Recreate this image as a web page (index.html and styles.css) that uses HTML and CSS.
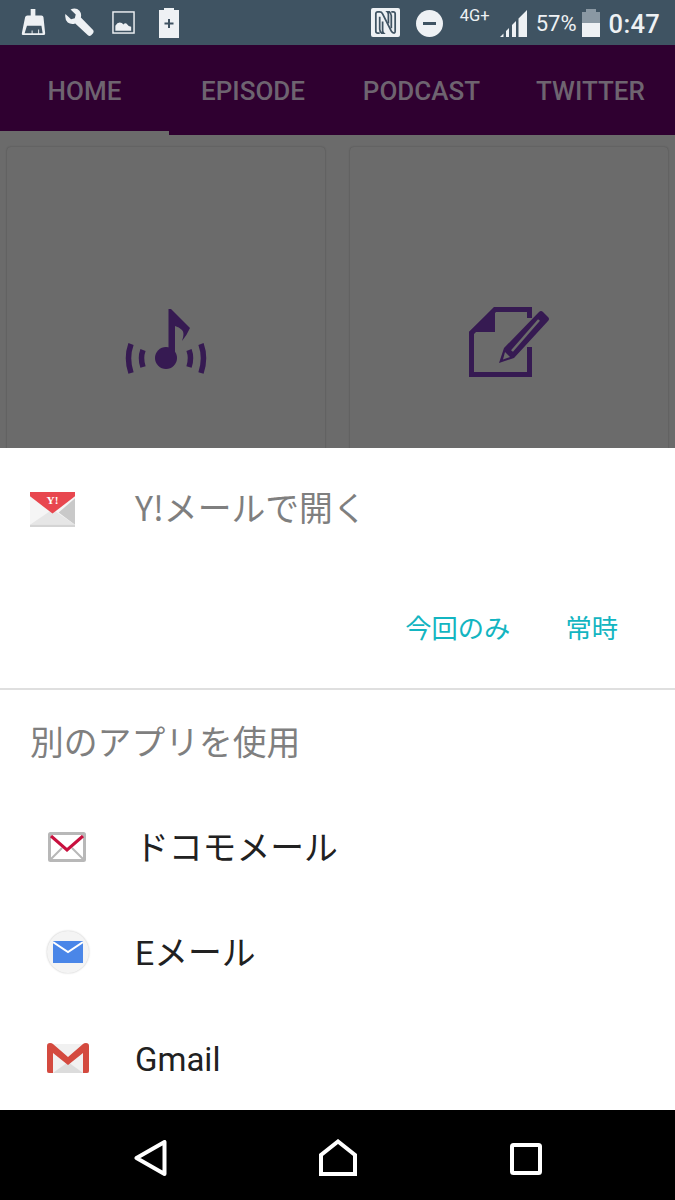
FILE: index.html
```html
<!DOCTYPE html>
<html lang="ja">
<head>
<meta charset="utf-8">
<title>Share sheet</title>
<link rel="stylesheet" href="styles.css">
</head>
<body>
<div class="screen">
  <header class="status">
    <div class="status-left">
      <svg class="ic-broom" viewBox="0 0 26 30"><path fill="#eef1f4" d="M10 1h5v7h6.500q2 0 2.200 2L25.500 27q.2 2-1.800 2H2q-2 0-1.500-2L4 10q.4-2 2.500-2H10z"/><path fill="#3f5362" d="M6 19h15.500l1.300 8H19v-4h-1v4h-6v-3h-1v3H3.500z"/></svg>
      <svg class="ic-wrench" viewBox="0 0 32 32"><path fill="#eef1f4" d="M1.500 6.500 7.500 12l4-1 1-4L7 1.500Q13-1 16.500 3q2.500 3 1.500 7L31 23.500q1.200 1.500 0 3.500l-2 2q-1.800 1.500-3.500 0L12 16.500q-4.500 1.500-8-1Q.5 12 1.500 6.500z"/></svg>
      <svg class="ic-image" viewBox="0 0 24 24"><rect x="1" y="1" width="22" height="22" fill="none" stroke="#eef1f4" stroke-width="1.500"/><path fill="#eef1f4" d="M3.500 20.500v-5q2-3.500 4.500-3.500t4 2q1.500-2 3-1 1.500 2.500 5 3.500v4z"/></svg>
      <svg class="ic-batt" viewBox="0 0 20 30"><path fill="#eef1f4" d="M5 0h10v2h5v28H0V2h5z"/><path fill="none" stroke="#3f5362" stroke-width="2" d="M10 11v9M5.500 15.500h9"/></svg>
    </div>
    <div class="status-right">
      <svg class="ic-nfc" viewBox="0 0 30 30"><rect width="30" height="30" rx="2" fill="#eef1f4"/><path fill="none" stroke="#3f5362" stroke-width="1.800" d="M9 26H7q-2 0-2-2V6q0-2 2-2h2q2 0 3 2l9 18q1 2 3 2 1 0 1-2V6q0-2-2-2h-2"/><path fill="none" stroke="#3f5362" stroke-width="1.800" d="M9 9v13q0 2 2 4h2q-1-1-1-3v-9M21 21V8q0-2-2-4h-2q1 1 1 3v9"/></svg>
      <span class="dnd"><span class="dnd-bar"></span></span>
      <span class="net">4G+</span>
      <svg class="ic-signal" viewBox="0 0 27 28"><path fill="#eef1f4" d="M0 28l3.500-3.500V28zM6 22l3-3v9H6zM12 16l4-4v16h-4zM18.500 9.500 27 1v27h-8.500z"/></svg>
      <span class="pct">57%</span>
      <span class="batt"><span class="batt-cap"></span><span class="batt-body"><span class="batt-fill"></span></span></span>
      <span class="clock">0:47</span>
    </div>
  </header>

  <nav class="tabs">
    <div class="tab tab-active">HOME</div>
    <div class="tab">EPISODE</div>
    <div class="tab">PODCAST</div>
    <div class="tab">TWITTER</div>
  </nav>

  <main class="content">
    <div class="card">
      <svg class="ic-music" viewBox="0 0 82 66"><g fill="none" stroke="#361a52" stroke-width="5.500"><path d="M6 36Q1 50 6 65"/><path d="M18 42Q15 50 18 59"/><path d="M76 36Q81 50 76 65"/><path d="M64 42Q67 50 64 59"/></g><circle cx="41" cy="50" r="11" fill="#361a52"/><path fill="#361a52" d="M43.500 1H46L65 20Q62 27 57 33 60 25 57 22 54 19 50 18V50H43.500z"/></svg>
    </div>
    <div class="card">
      <svg class="ic-note" viewBox="0 0 82 74"><path fill="none" stroke="#361a52" stroke-width="5" d="M61.500 12V3.500H27L3.500 27V68.500H61.500V41"/><path fill="#361a52" d="M27 1V26H1z"/><path fill="#361a52" d="M71 6q2-2 4 0l5 5q2 2 0 4L46 52 31 57l5-15z"/><path fill="none" stroke="#6b6b6b" stroke-width="2.500" d="M71 14 44 45"/><path fill="#6b6b6b" d="M37 46l5 5-7 2.500z"/></svg>
    </div>
  </main>

  <section class="sheet">
    <div class="preferred">
      <svg class="ic-ymail" viewBox="0 0 44 34"><path fill="#f5f5f5" d="M0 2h44v30H0z"/><path fill="#c9c9c9" d="M44 6v26L28 20z"/><path fill="#e6e6e6" d="M0 32l22-15 22 15z"/><path fill="#d4d4d4" d="M0 32h44v2H0z"/><path fill="#e8474f" d="M0 0h44v4L22 21 0 4z"/><text x="22" y="12" class="y-text">Y!</text></svg>
      <span class="pref-title">Y!メールで開く</span>
    </div>
    <div class="actions">
      <span class="action action-once">今回のみ</span>
      <span class="action">常時</span>
    </div>
    <div class="divider"></div>
    <h2 class="other">別のアプリを使用</h2>
    <div class="app">
      <span class="app-icon"><svg class="ic-docomo" viewBox="0 0 38 30"><rect x="1.500" y="1.500" width="35" height="27" fill="#fff" stroke="#b8b8b8" stroke-width="3" rx="1"/><path fill="none" stroke="#b8b8b8" stroke-width="2" d="M2 28 14 16M36 28 24 16"/><path fill="none" stroke="#c8103e" stroke-width="3" d="M3 4 19 18 35 4"/></svg></span>
      <span class="app-name">ドコモメール</span>
    </div>
    <div class="app">
      <span class="app-icon"><span class="email-disc"><svg class="ic-email" viewBox="0 0 30 22"><rect width="30" height="22" fill="#4a86e8"/><path fill="none" stroke="#fff" stroke-width="2" d="M0 1 15 11 30 1"/></svg></span></span>
      <span class="app-name">Eメール</span>
    </div>
    <div class="app">
      <span class="app-icon"><svg class="ic-gmail" viewBox="0 0 42 30"><path fill="#f1f1f1" d="M0 1h42v29H0z"/><path fill="#dcdcdc" d="M6 30 21 19l15 11z"/><path fill="#d44a3f" d="M0 3q0-3 3-3 2 0 3 1l15 13L36 1q1-1 3-1 3 0 3 3v25q0 2-2 2h-4V10L21 22 6 10v20H2q-2 0-2-2z"/></svg></span>
      <span class="app-name app-name-latin">Gmail</span>
    </div>
  </section>

  <footer class="navbar">
    <svg class="ic-back" viewBox="0 0 33 36"><path fill="none" stroke="#fff" stroke-width="4" stroke-linejoin="round" d="M2.500 18 30.500 2v32z"/></svg>
    <svg class="ic-home" viewBox="0 0 38 37"><path fill="none" stroke="#fff" stroke-width="4" stroke-linejoin="miter" d="M2 35V16L19 2.500 36 16v19z"/></svg>
    <svg class="ic-recent" viewBox="0 0 32 32"><rect x="2" y="2" width="28" height="28" rx="1.500" fill="none" stroke="#fff" stroke-width="4"/></svg>
  </footer>
</div>
</body>
</html>
```

FILE: styles.css
```css
* { box-sizing: border-box; }
html, body { margin: 0; padding: 0; background: #000; }
body { font-family: "Noto Sans CJK JP", Roboto, sans-serif; }
.screen { width: 675px; height: 1200px; display: flex; flex-direction: column; overflow: hidden; }

.status { height: 45px; flex: none; background: #3f5362; display: flex; justify-content: space-between; align-items: flex-start; padding-top: 8px; color: #eef1f4; font-family: Roboto, sans-serif; }
.status-left { display: flex; align-items: flex-start; padding-left: 21px; }
.ic-broom { width: 25px; height: 28px; display: block; }
.ic-wrench { width: 30px; height: 30px; display: block; margin-left: 18px; }
.ic-image { width: 23px; height: 23px; display: block; margin: 3px 0 0 18px; }
.ic-batt { width: 20px; height: 30px; display: block; margin-left: 24px; }
.status-right { display: flex; align-items: flex-start; padding-right: 15px; }
.ic-nfc { width: 29px; height: 29px; display: block; margin-right: 1px; }
.dnd { width: 27px; height: 27px; border-radius: 50%; background: #eef1f4; margin: 2px 0 0 15px; display: flex; align-items: center; justify-content: center; }
.dnd-bar { width: 13px; height: 3px; background: #3f5362; }
.net { font-size: 16.500px; line-height: 15px; width: 32px; margin-left: 17px; }
.ic-signal { width: 27px; height: 28px; display: block; margin: 1px 0 0 8px; }
.pct { font-size: 22px; line-height: 26px; margin: 3px 0 0 9px; }
.batt { width: 18px; height: 28px; margin: 1px 0 0 5px; display: flex; flex-direction: column; align-items: center; }
.batt-cap { width: 10px; height: 3px; background: #8a98a3; flex: none; }
.batt-body { width: 18px; flex: 1; background: #8a98a3; display: flex; align-items: flex-end; }
.batt-fill { width: 100%; height: 57%; background: #eef1f4; }
.clock { font-size: 25.500px; font-weight: 500; line-height: 30px; margin: 1px 0 0 9px; letter-spacing: .3px; }

.tabs { height: 90px; flex: none; background: #2f0030; display: grid; grid-template-columns: 169px 168px 169px 169px; }
.tab { display: flex; align-items: center; justify-content: center; padding-top: 1px; font-family: Roboto, sans-serif; font-weight: 500; font-size: 26px; color: #6e6470; }
.tab-active { border-bottom: 4px solid #6b6b6b; padding-top: 5px; }

.content { height: 313px; flex: none; background: #6b6b6b; display: grid; grid-template-columns: 318px 318px; column-gap: 25px; padding: 12px 0 0 7px; overflow: hidden; }
.card { height: 340px; background: #6b6b6b; border-radius: 4px; box-shadow: 0 0 2px rgba(0,0,0,.28), 0 1px 1px rgba(0,0,0,.1); display: flex; justify-content: center; padding-top: 161px; }
.ic-music { width: 82px; height: 66px; display: block; }
.ic-note { width: 82px; height: 74px; display: block; margin-top: -2px; }

.sheet { flex: 1; background: #fff; display: flex; flex-direction: column; overflow: hidden; }
.preferred { height: 122px; flex: none; display: flex; align-items: flex-start; padding: 44px 0 0 30px; }
.ic-ymail { width: 45px; height: 35px; display: block; flex: none; }
.y-text { font-family: "Liberation Serif", serif; font-weight: 700; font-size: 11px; fill: #fff; text-anchor: middle; }
.pref-title { margin: -10px 0 0 60px; font-size: 33.800px; line-height: 50px; color: #7f7f7f; white-space: nowrap; }
.actions { height: 118px; flex: none; display: flex; justify-content: flex-end; padding: 38px 57px 0 0; }
.action { font-size: 26.300px; line-height: 38px; color: #13b5c1; }
.action-once { margin-right: 55px; }
.divider { height: 2px; flex: none; background: #dfdfdf; }
.other { margin: 0; height: 106px; flex: none; padding: 26px 0 0 30px; font-size: 33.800px; line-height: 50px; font-weight: 400; color: #7f7f7f; white-space: nowrap; }
.app { height: 105.500px; flex: none; display: flex; align-items: center; }
.app-icon { width: 135px; flex: none; display: flex; justify-content: center; padding-bottom: 4px; }
.app-name { font-size: 33.800px; line-height: 50px; color: #212121; white-space: nowrap; font-family: Roboto, "Noto Sans CJK JP", sans-serif; }
.app-name-latin { font-size: 33px; }
.ic-docomo { width: 38px; height: 30px; display: block; margin-left: -1px; }
.email-disc { width: 42px; height: 42px; border-radius: 50%; background: #f4f4f4; box-shadow: 0 0 2px rgba(0,0,0,.25); display: flex; align-items: center; justify-content: center; }
.ic-email { width: 30px; height: 22px; display: block; }
.ic-gmail { width: 42px; height: 30px; display: block; }

.navbar { height: 90px; flex: none; background: #000; display: flex; align-items: flex-start; padding-top: 30px; }
.ic-back { width: 33px; height: 36px; display: block; margin-left: 134px; }
.ic-home { width: 38px; height: 37px; display: block; margin: -1px 0 0 152px; }
.ic-recent { width: 32px; height: 32px; display: block; margin: 3px 0 0 153px; }
```
